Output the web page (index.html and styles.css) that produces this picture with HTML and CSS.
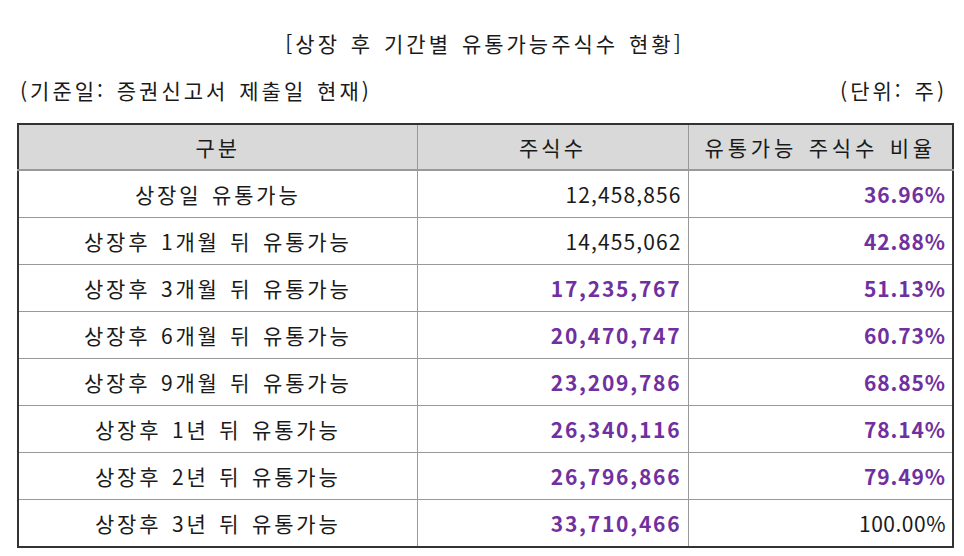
FILE: index.html
```html
<!DOCTYPE html>
<html lang="ko">
<head>
<meta charset="utf-8">
<title>상장 후 기간별 유통가능주식수 현황</title>
<link rel="stylesheet" href="styles.css">
</head>
<body>
<div class="wrap">
  <h1 class="title">[상장 후 기간별 유통가능주식수 현황]</h1>
  <div class="meta">
    <span>(기준일: 증권신고서 제출일 현재)</span>
    <span>(단위: 주)</span>
  </div>
  <table class="tbl">
    <colgroup>
      <col class="c1"><col class="c2"><col class="c3">
    </colgroup>
    <thead>
      <tr><th>구분</th><th>주식수</th><th class="wide">유통가능 주식수 비율</th></tr>
    </thead>
    <tbody>
      <tr><td class="lbl">상장일 유통가능</td><td class="num">12,458,856</td><td class="pct hl">36.96%</td></tr>
      <tr><td class="lbl">상장후 1개월 뒤 유통가능</td><td class="num">14,455,062</td><td class="pct hl">42.88%</td></tr>
      <tr><td class="lbl">상장후 3개월 뒤 유통가능</td><td class="num hl">17,235,767</td><td class="pct hl">51.13%</td></tr>
      <tr><td class="lbl">상장후 6개월 뒤 유통가능</td><td class="num hl">20,470,747</td><td class="pct hl">60.73%</td></tr>
      <tr><td class="lbl">상장후 9개월 뒤 유통가능</td><td class="num hl">23,209,786</td><td class="pct hl">68.85%</td></tr>
      <tr><td class="lbl">상장후 1년 뒤 유통가능</td><td class="num hl">26,340,116</td><td class="pct hl">78.14%</td></tr>
      <tr><td class="lbl">상장후 2년 뒤 유통가능</td><td class="num hl">26,796,866</td><td class="pct hl">79.49%</td></tr>
      <tr><td class="lbl">상장후 3년 뒤 유통가능</td><td class="num hl">33,710,466</td><td class="pct">100.00%</td></tr>
    </tbody>
  </table>
</div>
</body>
</html>
```
FILE: styles.css
```css
html, body {
  margin: 0;
  padding: 0;
  background: #ffffff;
}
body {
  font-family: "Noto Sans CJK KR", "Noto Sans", sans-serif;
  font-size: 21px;
  color: #1a1a1a;
}
.wrap {
  width: 935px;
  margin-left: 17px;
  padding-top: 27px;
}
.title {
  margin: 0;
  font-size: 21px;
  font-weight: normal;
  text-align: center;
  line-height: 32px;
  letter-spacing: 3px;
  word-spacing: 2px;
}
.meta {
  display: flex;
  justify-content: space-between;
  padding: 0 5px 0 3px;
  margin-top: 15px;
  line-height: 32px;
  letter-spacing: 3px;
  word-spacing: 2px;
}
.tbl {
  margin-top: 17px;
  width: 935px;
  border-collapse: collapse;
  border: 2px solid #333333;
  table-layout: fixed;
}
.c1 { width: 399px; }
.c2 { width: 271px; }
.c3 { width: 265px; }
.tbl th {
  background: #d9d9d9;
  font-weight: normal;
  height: 44px;
  padding: 0;
  border: 1px solid #999999;
  border-bottom: 2px solid #999999;
  border-top: 2px solid #333333;
  letter-spacing: 3px;
  word-spacing: 2px;
}
.tbl th.wide {
  letter-spacing: 3.8px;
}
.tbl td {
  height: 46px;
  padding: 0 6px;
  border: 1px solid #999999;
}
.tbl tr:last-child td {
  border-bottom: 2px solid #333333;
}
.tbl th:first-child, .tbl td:first-child {
  border-left: 2px solid #333333;
}
.tbl th:last-child, .tbl td:last-child {
  border-right: 2px solid #333333;
}
.lbl {
  text-align: center;
  letter-spacing: 2.8px;
  word-spacing: 2px;
}
.num {
  text-align: right;
  letter-spacing: 1.1px;
}
.num.hl {
  letter-spacing: 1.8px;
}
.pct {
  text-align: right;
  letter-spacing: 0.5px;
}
.pct.hl {
  letter-spacing: 0.9px;
}
.hl {
  color: #7030a0;
  font-weight: bold;
}
```
